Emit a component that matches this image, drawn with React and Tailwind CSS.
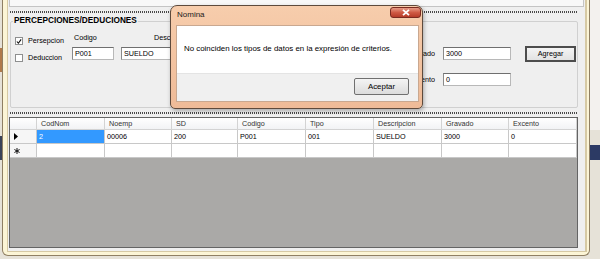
const headers = ["CodNom", "Noemp", "SD", "Codigo", "Tipo", "Descripcion", "Gravado", "Excento"]
const widths = ["w-[68px]", "w-[67px]", "w-[66px]", "w-[68px]", "w-[68px]", "w-[68px]", "w-[67px]", "w-[68px]"]
const row = ["2", "00006", "200", "P001", "001", "SUELDO", "3000", "0"]

function CheckBox({ checked }) {
  return (
    <span className="flex h-[8px] w-[8px] items-center justify-center border border-[#8e8f8f] bg-white">
      {checked && (
        <svg width="7" height="7" viewBox="0 0 7 7">
          <path d="M1 3.5 L2.8 5.5 L6 1" fill="none" stroke="#111" strokeWidth="1.3" />
        </svg>
      )}
    </span>
  )
}

function TextBox({ value, className = "" }) {
  return (
    <div className={`flex h-[13px] items-center border border-[#b8b8b8] border-t-[#6f6f6f] border-l-[#8a8a8a] bg-white pl-[2px] ${className}`}>
      {value}
    </div>
  )
}

function Grid() {
  return (
    <div className="ml-[1px] mt-[3px] h-[131px] w-[569px] border border-[#646464] bg-[#aaa9a7]">
      {/* header */}
      <div className="flex h-[12px] bg-gradient-to-b from-white to-[#f1f2f4] text-[#333]">
        <div className="h-full w-[27px] border-r border-b border-[#d3d3d3]" />
        {headers.map((h, i) => (
          <div key={h} className={`${widths[i]} flex h-full items-center border-r border-b border-[#d3d3d3] pl-[4px]`}>
            {h}
          </div>
        ))}
      </div>
      {/* data row */}
      <div className="flex h-[14px] bg-white">
        <div className="flex h-full w-[27px] items-center border-r border-b border-[#c8c8c8] bg-[#f6f6f6] pl-[4px]">
          <svg width="4" height="7" viewBox="0 0 4 7">
            <path d="M0 0 L4 3.5 L0 7 Z" fill="#000" />
          </svg>
        </div>
        {row.map((v, i) => (
          <div key={i} className={`${widths[i]} flex h-full items-center border-r border-b border-[#c8c8c8]`}>
            {i === 0 ? (
              <div className="flex h-full w-full items-center bg-[#3399ff] pl-[2px] text-white">{v}</div>
            ) : (
              <span className="pl-[2px]">{v}</span>
            )}
          </div>
        ))}
      </div>
      {/* new row */}
      <div className="flex h-[14px] bg-white">
        <div className="flex h-full w-[27px] items-center border-r border-b border-[#c8c8c8] bg-[#f6f6f6] pl-[4px]">
          <svg width="6" height="6" viewBox="0 0 6 6">
            <path d="M3 0 V6 M0.4 1.5 L5.6 4.5 M0.4 4.5 L5.6 1.5" stroke="#111" strokeWidth="1" />
          </svg>
        </div>
        {widths.map((w, i) => (
          <div key={i} className={`${w} h-full border-r border-b border-[#c8c8c8]`} />
        ))}
      </div>
    </div>
  )
}

function MainWindow() {
  return (
    <div className="absolute left-[2px] top-0 h-[256px] w-[588px] rounded-b-[6px] border-x border-b border-[#8f7f63] bg-[#fcf5d6] pl-[4px] pr-[2px]">
      <div className="h-[252px] w-[580px] border-l border-r-2 border-b border-[#d6c9a4] bg-[#efefef]">
        {/* top panel */}
        <div className="mx-[1px] h-[7px] border-x border-b border-[#c4c4c4] bg-[#f8f8f8]" />
        <div className="ml-[2px] mt-[4px] h-[2px] w-[568px] bg-[repeating-linear-gradient(90deg,#4a4a4a_0_1px,transparent_1px_2px)]" />

        {/* group box */}
        <fieldset className="ml-[2px] mt-[3px] h-[92px] w-[568px] rounded-[2px] border border-[#d0d0d0]">
          <legend className="ml-[2px] px-[1px] text-[8.25px] font-bold leading-[10px]">PERCEPCIONES/DEDUCIONES</legend>
          <div className="flex items-start">
            <div className="flex w-[61px] flex-col gap-[7px] pl-[4px] pt-[10px]">
              <div className="flex h-[10px] items-center">
                <CheckBox checked />
                <span className="ml-[5px]">Persepcion</span>
              </div>
              <div className="flex h-[10px] items-center">
                <CheckBox />
                <span className="ml-[5px]">Deduccion</span>
              </div>
            </div>
            <div className="w-[42px] pt-[7px]">
              <div className="h-[10px] pl-[2px]">Codigo</div>
              <TextBox value="P001" className="mt-[4px]" />
            </div>
            <div className="ml-[7px] w-[150px] pt-[7px]">
              <div className="h-[10px] pl-[33px]">Descripcion</div>
              <TextBox value="SUELDO" className="mt-[4px]" />
            </div>
            <div className="ml-[109px] flex flex-col gap-[13px] pt-[21px]">
              <div className="flex items-center">
                <span className="w-[55px] text-right">Gravado</span>
                <TextBox value="3000" className="ml-[8px] w-[68px]" />
              </div>
              <div className="flex items-center">
                <span className="w-[55px] text-right">Excento</span>
                <TextBox value="0" className="ml-[8px] w-[68px]" />
              </div>
            </div>
            <div className="ml-[14px] pt-[20px]">
              <button className="flex h-[16px] w-[51px] items-center justify-center border-2 border-[#4d4d4d] bg-gradient-to-b from-[#f4f4f4] to-[#e2e2e2]">
                Agregar
              </button>
            </div>
          </div>
        </fieldset>

        <div className="ml-[2px] mt-[4px] h-[2px] w-[568px] bg-[repeating-linear-gradient(90deg,#4a4a4a_0_1px,transparent_1px_2px)]" />
        <Grid />
      </div>
    </div>
  )
}

function Dialog() {
  return (
    <div className="absolute left-[170px] top-[5px] flex h-[104px] w-[253px] flex-col rounded-t-[7px] rounded-b-[5px] border border-[#5e4a3c] bg-gradient-to-b from-[#f7cdac] to-[#efbb98] shadow-[1px_2px_4px_rgba(0,0,0,0.3)]">
      <div className="flex h-[19px] items-start">
        <span className="ml-[6px] mt-[4px] text-[8px] leading-[10px] text-[#1a1a1a]">Nomina</span>
        <div className="ml-auto mr-[1px] mt-[1px] flex h-[11px] w-[31px] items-center justify-center rounded-[3px] border border-[#7a2b20] bg-gradient-to-b from-[#e69a86] via-[#cf5a44] to-[#b63b28]">
          <svg width="8" height="7" viewBox="0 0 8 7">
            <path d="M1 0.8 L7 6.2 M7 0.8 L1 6.2" stroke="#fff" strokeWidth="1.8" />
          </svg>
        </div>
      </div>
      <div className="ml-[5px] mr-[3px] border border-[#c9a890]">
        <div className="h-[47px] bg-white pl-[7px] pt-[18px] text-[7.9px]">
          No coinciden los tipos de datos en la expresión de criterios.
        </div>
        <div className="flex h-[28px] items-start justify-end border-t border-[#e4e4e4] bg-[#f0f0f0]">
          <button className="mr-[9px] mt-[4px] flex h-[17px] w-[55px] items-center justify-center rounded-[2px] border border-[#707070] bg-gradient-to-b from-[#f4f4f4] to-[#dcdcdc] text-[7.9px]">
            Aceptar
          </button>
        </div>
      </div>
    </div>
  )
}

export default function App() {
  return (
    <div className="relative h-[259px] w-[600px] overflow-hidden bg-[#e6e2d8] font-['Liberation_Sans',Arial,sans-serif] text-[7.2px] leading-[10px] text-black">
      {/* bits of the desktop behind */}
      <div className="absolute left-0 top-[48px] h-[24px] w-[2px] bg-[#b07a4a]" />
      <div className="absolute left-0 top-[136px] h-[24px] w-[2px] bg-[#3a4258]" />
      <div className="absolute left-[590px] top-0 h-[130px] w-[10px] bg-[#f3f1ee]" />
      <div className="absolute left-[590px] top-[145px] h-[15px] w-[10px] bg-[#2c3a64]" />
      <MainWindow />
      <Dialog />
    </div>
  )
}
